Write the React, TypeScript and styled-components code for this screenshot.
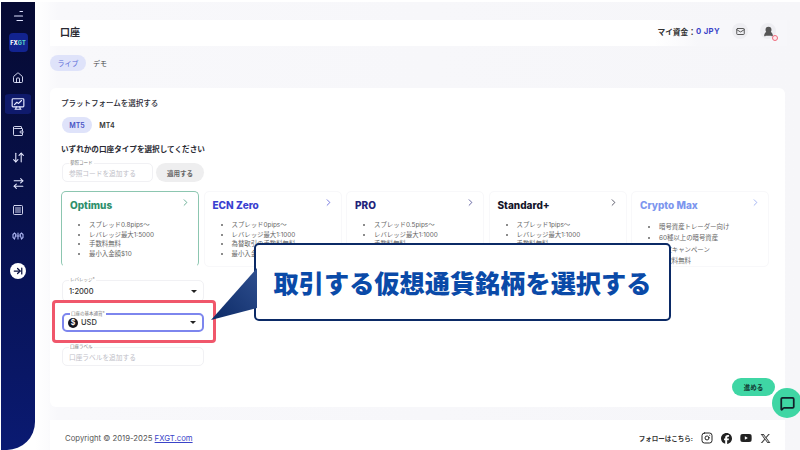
import React from 'react';
import styled, { createGlobalStyle } from 'styled-components';
import {
  Home,
  Wallet,
  ArrowDownUp,
  ArrowRightLeft,
  SquareMenu,
  ArrowRightToLine,
  Mail,
  UserRound,
  MessageSquare,
  ChevronRight,
  Instagram,
} from 'lucide-react';
import { FaFacebook, FaYoutube, FaXTwitter } from 'react-icons/fa6';

const GlobalStyle = createGlobalStyle`
  html, body { margin: 0; padding: 0; width: 800px; height: 450px; overflow: hidden; background: #fff; }
  * { box-sizing: border-box; }
  body { font-family: Inter, "Noto Sans CJK JP", sans-serif; color: #2a2a33; }
`;

type Plan = { name: string; color: string; points: string[]; active?: boolean; roomy?: boolean };

const plans: Plan[] = [
  { name: 'Optimus', color: '#2f8f6c', active: true, points: ['スプレッド0.8pips〜', 'レバレッジ最大1:5000', '手数料無料', '最小入金額$10'] },
  { name: 'ECN Zero', color: '#3a3fd0', points: ['スプレッド0pips〜', 'レバレッジ最大1:1000', '為替取引の手数料無料', '最小入金額$10'] },
  { name: 'PRO', color: '#23237a', points: ['スプレッド0.5pips〜', 'レバレッジ最大1:1000', '手数料無料', '最小入金額$10'] },
  { name: 'Standard+', color: '#14142a', points: ['スプレッド1pips〜', 'レバレッジ最大1:1000', '手数料無料', '最小入金額$10'] },
  { name: 'Crypto Max', color: '#7d96ee', roomy: true, points: ['暗号資産トレーダー向け', '60種以上の暗号資産', '限定キャンペーン', '手数料無料'] },
];

const MonitorIcon = () => (
  <svg width="14" height="14" viewBox="0 0 24 24" fill="none" stroke="#e6e9ff" strokeWidth="2" strokeLinecap="round" strokeLinejoin="round">
    <rect x="2" y="3" width="20" height="14" rx="1.5" />
    <path d="M6 13l4-4 3 2 5-5" />
    <path d="M9 17l-1 4M15 17l1 4M7 21h10" />
  </svg>
);

const GaugeIcon = () => (
  <svg width="12" height="12" viewBox="0 0 24 24" fill="none" stroke="#aab3f0" strokeWidth="2.2" strokeLinecap="round">
    <path d="M2 9l3-3 3 3-3 9-3-3zM22 9l-3-3-3 3 3 9 3-3z" />
    <path d="M12 6v12M9 12h6" />
  </svg>
);

const MenuIcon = () => (
  <svg width="11" height="12" viewBox="0 0 11 12" fill="none" stroke="#dfe3ff" strokeWidth="1.2" strokeLinecap="round">
    <path d="M7 1.5h2.5M1.5 6h8M4 10.5h5.5" />
  </svg>
);

const App = () => {
  return (
    <Page>
      <GlobalStyle />
      <Sidebar>
        <MenuToggle>
          <MenuIcon />
        </MenuToggle>
        <Logo>
          FX<LogoAccent>GT</LogoAccent>
        </Logo>
        <NavItem>
          <Home size={12} strokeWidth={1.8} />
        </NavItem>
        <NavItem $active>
          <MonitorIcon />
        </NavItem>
        <NavItem>
          <Wallet size={12} strokeWidth={1.8} />
        </NavItem>
        <NavItem>
          <ArrowDownUp size={13} />
        </NavItem>
        <NavItem>
          <ArrowRightLeft size={13} />
        </NavItem>
        <NavItem>
          <SquareMenu size={12} strokeWidth={1.8} />
        </NavItem>
        <NavItem>
          <GaugeIcon />
        </NavItem>
        <CollapseButton>
          <ArrowRightToLine size={10} strokeWidth={3} />
        </CollapseButton>
      </Sidebar>

      <Main>
        <TopBar>
          <PageTitle>口座</PageTitle>
          <Funds>
            <FundsLabel>マイ資金：</FundsLabel>
            <FundsValue>0 JPY</FundsValue>
          </Funds>
          <RoundIcon>
            <Mail size={9} strokeWidth={2.6} />
          </RoundIcon>
          <RoundIcon>
            <UserRound size={11} strokeWidth={3} fill="#555" />
            <AlertDot />
          </RoundIcon>
        </TopBar>

        <Tabs>
          <Pill $active>ライブ</Pill>
          <Pill>デモ</Pill>
        </Tabs>

        <Panel>
          <SectionTitle>プラットフォームを選択する</SectionTitle>
          <PlatformRow>
            <PlatformPill $active>MT5</PlatformPill>
            <PlatformPill>MT4</PlatformPill>
          </PlatformRow>
          <SectionHeading>いずれかの口座タイプを選択してください</SectionHeading>
          <CodeRow>
            <Field $width={91} $height={19}>
              <FieldLabel>参照コード</FieldLabel>
              <Placeholder>参照コードを追加する</Placeholder>
            </Field>
            <ApplyButton>適用する</ApplyButton>
          </CodeRow>

          <PlanRow>
            {plans.map((plan) => (
              <PlanCard key={plan.name} $active={plan.active}>
                <PlanHead>
                  <PlanName $color={plan.color}>{plan.name}</PlanName>
                  <ChevronRight size={11} strokeWidth={1.5} color={plan.color} />
                </PlanHead>
                <PlanList $roomy={plan.roomy}>
                  {plan.points.map((point) => (
                    <li key={point}>{point}</li>
                  ))}
                </PlanList>
              </PlanCard>
            ))}
          </PlanRow>

          <FormColumn>
            <Field $width={142} $height={22}>
              <FieldLabel>レバレッジ*</FieldLabel>
              <SelectValue>1:2000</SelectValue>
              <Caret />
            </Field>
            <Highlighted>
              <Field $width={142} $height={19} $focused>
                <FieldLabel>口座の基本通貨*</FieldLabel>
                <CoinBadge>$</CoinBadge>
                <SelectValue>USD</SelectValue>
                <Caret />
              </Field>
            </Highlighted>
            <Field $width={142} $height={19}>
              <FieldLabel>口座ラベル</FieldLabel>
              <Placeholder>口座ラベルを追加する</Placeholder>
            </Field>
          </FormColumn>

          <ProceedButton>進める</ProceedButton>
        </Panel>

        <Footer>
          <Copyright>
            Copyright © 2019-2025 <FooterLink>FXGT.com</FooterLink>
          </Copyright>
          <FollowLabel>フォローはこちら:</FollowLabel>
          <Socials>
            <Instagram size={12} strokeWidth={2} />
            <FaFacebook size={11} />
            <FaYoutube size={12} />
            <FaXTwitter size={11} color="#444" />
          </Socials>
        </Footer>
      </Main>

      <Callout>
        <CalloutPointer width="46" height="52" viewBox="0 0 46 52">
          <defs>
            <linearGradient id="pointerFill" x1="0" y1="1" x2="1" y2="0">
              <stop offset="0" stopColor="#0c2a66" />
              <stop offset="1" stopColor="#2f4f8f" />
            </linearGradient>
          </defs>
          <path d="M46 0L0 52L46 40Z" fill="url(#pointerFill)" />
        </CalloutPointer>
        <CalloutText>取引する仮想通貨銘柄を選択する</CalloutText>
      </Callout>

      <ChatBubble>
        <MessageSquare size={15} strokeWidth={2.8} color="#12202a" />
      </ChatBubble>
    </Page>
  );
};

export default App;

const Page = styled.div`
  position: relative;
  display: flex;
  width: 800px;
  height: 450px;
  padding-top: 2px;
  overflow: hidden;
  background: #fff;
`;

const Sidebar = styled.nav`
  flex: none;
  display: flex;
  flex-direction: column;
  align-items: center;
  width: 34px;
  height: 448px;
  margin-left: 1px;
  padding-top: 7px;
  color: #e6e9ff;
  background: linear-gradient(180deg, #060a33 0%, #07104a 45%, #0a1a72 100%);
  border-bottom-right-radius: 28px;
`;

const MenuToggle = styled.div`
  display: flex;
  align-items: center;
  justify-content: center;
  height: 14px;
  margin-bottom: 10px;
`;

const Logo = styled.div`
  display: flex;
  align-items: center;
  justify-content: center;
  width: 19px;
  height: 19px;
  margin-bottom: 13px;
  border-radius: 4px;
  font-size: 5.6px;
  font-weight: 800;
  color: #fff;
  background: #12238f;
`;

const LogoAccent = styled.span`
  color: #58d8c8;
`;

const NavItem = styled.div<{ $active?: boolean }>`
  display: flex;
  align-items: center;
  justify-content: center;
  width: 26px;
  height: 26px;
  padding: 3px 0;
  margin-bottom: 0.4px;
  border-radius: 5px;
  background: ${(p) => (p.$active ? '#0f1a6c' : 'transparent')};
  background-clip: content-box;
`;

const CollapseButton = styled.div`
  display: flex;
  align-items: center;
  justify-content: center;
  width: 16px;
  height: 16px;
  margin-top: 13px;
  border-radius: 50%;
  color: #0a1040;
  background: #fff;
`;

const Main = styled.main`
  flex: 1;
  display: flex;
  flex-direction: column;
  padding: 0 15px 0 15px;
  background: linear-gradient(90deg, #fff 0%, #f8f8fb 3%, #f6f6f9 100%);
`;

const TopBar = styled.header`
  display: flex;
  align-items: center;
  flex: none;
  height: 26px;
  margin: 18px -2px 0 0;
  padding: 0 11px 4px 10px;
  background: linear-gradient(90deg, #fff 0%, #fff 82%, #f7f7fa 88%);
`;

const PageTitle = styled.h1`
  flex: 1;
  margin: 0;
  font-size: 10px;
  font-weight: 700;
`;

const Funds = styled.div`
  display: flex;
  align-items: center;
  font-size: 7.7px;
  font-weight: 700;
`;

const FundsLabel = styled.span`
  color: #333;
`;

const FundsValue = styled.span`
  letter-spacing: 0.4px;
  color: #3a44c8;
`;

const RoundIcon = styled.div`
  position: relative;
  display: flex;
  align-items: center;
  justify-content: center;
  width: 16px;
  height: 16px;
  margin-left: 12px;
  border-radius: 50%;
  color: #555;
  background: #eeeef2;
`;

const AlertDot = styled.span`
  position: absolute;
  right: -2px;
  bottom: -2px;
  width: 6px;
  height: 6px;
  border: 1px solid #ef6a7c;
  border-radius: 50%;
  background: #fde8ec;
`;

const Tabs = styled.div`
  display: flex;
  align-items: center;
  flex: none;
  height: 16px;
  margin-top: 9px;
`;

const Pill = styled.div<{ $active?: boolean }>`
  display: flex;
  align-items: center;
  justify-content: center;
  width: 36px;
  height: 16px;
  margin-left: ${(p) => (p.$active ? '0' : '-4px')};
  border-radius: 8px;
  font-size: 7px;
  color: ${(p) => (p.$active ? '#5b6bd8' : '#444')};
  background: ${(p) => (p.$active ? '#dfe3fa' : 'transparent')};
`;

const Panel = styled.section`
  position: relative;
  flex: none;
  height: 319px;
  margin-top: 17px;
  padding: 10px 7px 0 11px;
  border-radius: 6px;
  background: #fff;
`;

const SectionTitle = styled.h2`
  margin: 0;
  height: 12px;
  font-size: 7.5px;
  line-height: 12px;
  font-weight: 500;
`;

const PlatformRow = styled.div`
  display: flex;
  align-items: center;
  margin-top: 7px;
`;

const PlatformPill = styled.div<{ $active?: boolean }>`
  display: flex;
  align-items: center;
  justify-content: center;
  width: 30px;
  height: 16px;
  margin-left: ${(p) => (p.$active ? '1px' : '0')};
  border-radius: 8px;
  font-size: 7px;
  font-weight: 600;
  color: ${(p) => (p.$active ? '#4652c4' : '#333')};
  background: ${(p) => (p.$active ? '#dfe3fa' : 'transparent')};
`;

const SectionHeading = styled.h2`
  margin: 11px 0 0;
  height: 12px;
  font-size: 7.6px;
  line-height: 12px;
  font-weight: 700;
`;

const CodeRow = styled.div`
  display: flex;
  align-items: center;
  gap: 3px;
  margin: 7px 0 0 1px;
`;

const Field = styled.div<{ $width: number; $height: number; $focused?: boolean }>`
  position: relative;
  display: flex;
  align-items: center;
  flex: none;
  width: ${(p) => p.$width}px;
  height: ${(p) => p.$height}px;
  padding: 0 6px 0 6px;
  border-width: ${(p) => (p.$focused ? '2px' : '1px')};
  border-style: solid;
  border-color: ${(p) => (p.$focused ? '#7d86ee' : '#f1f1f4')};
  border-radius: 5px;
  background: #fff;
`;

const FieldLabel = styled.label`
  position: absolute;
  top: -4px;
  left: 6px;
  padding: 0 1px;
  font-size: 4.5px;
  line-height: 6px;
  color: #777;
  background: #fff;
`;

const Placeholder = styled.span`
  font-size: 6.7px;
  color: #c0c0c8;
`;

const ApplyButton = styled.button`
  width: 48px;
  height: 19px;
  padding: 0;
  border: 0;
  border-radius: 10px;
  font-family: inherit;
  font-size: 6.5px;
  font-weight: 600;
  color: #666;
  background: #eeeeef;
`;

const PlanRow = styled.div`
  display: grid;
  grid-template-columns: repeat(5, 138px);
  column-gap: 4.5px;
  margin: 9px 0 0 0;
  align-items: start;
`;

const PlanCard = styled.article<{ $active?: boolean }>`
  height: 76px;
  padding: 7px 7px 0 8px;
  border: 1px solid ${(p) => (p.$active ? '#8cc6b0' : '#f8f8fa')};
  border-bottom-color: ${(p) => (p.$active ? 'transparent' : '#f8f8fa')};
  border-radius: 5px;
`;

const PlanHead = styled.div`
  display: flex;
  align-items: flex-start;
  justify-content: space-between;
  height: 12px;
  line-height: 0;

  svg {
    margin-top: -2px;
  }
`;

const PlanName = styled.h3<{ $color: string }>`
  margin: 0;
  font-size: 10px;
  line-height: 12px;
  font-weight: 800;
  color: ${(p) => p.$color};
`;

const PlanList = styled.ul<{ $roomy?: boolean }>`
  margin: ${(p) => (p.$roomy ? '11px' : '10px')} 0 0;
  padding-left: 19px;
  font-size: 6.4px;
  line-height: ${(p) => (p.$roomy ? '11.3px' : '9.5px')};
  color: #666;
  white-space: nowrap;
`;

const FormColumn = styled.div`
  display: flex;
  flex-direction: column;
  gap: 11px;
  margin: 13px 0 0 1px;
`;

const Highlighted = styled.div`
  position: relative;
  width: 142px;
  height: 19px;
  margin-bottom: 4px;

  &::after {
    content: '';
    position: absolute;
    inset: -13px -12px -11px -10px;
    border: 3px solid #f0576b;
    border-radius: 4px;
    pointer-events: none;
  }
`;

const SelectValue = styled.span`
  flex: 1;
  font-size: 7.5px;
  font-weight: 500;
  color: #333;
`;

const Caret = styled.span`
  width: 0;
  height: 0;
  border-left: 3px solid transparent;
  border-right: 3px solid transparent;
  border-top: 3px solid #222;
`;

const CoinBadge = styled.span`
  display: flex;
  align-items: center;
  justify-content: center;
  flex: none;
  width: 10px;
  height: 10px;
  margin: 0 3px 0 -2px;
  border-radius: 50%;
  font-size: 7px;
  font-weight: 700;
  color: #fff;
  background: #14141e;
`;

const ProceedButton = styled.button`
  position: absolute;
  right: 10px;
  bottom: 11px;
  width: 43px;
  height: 18px;
  padding: 0;
  border: 0;
  border-radius: 9px;
  font-family: inherit;
  font-size: 6.5px;
  font-weight: 700;
  color: #123a33;
  background: #3fd6a4;
`;

const Footer = styled.footer`
  display: flex;
  align-items: center;
  flex: none;
  height: 30px;
  margin-top: 13px;
  padding: 6px 14px 0 15px;
  background: #fff;
`;

const Copyright = styled.div`
  flex: 1;
  font-size: 7.75px;
  color: #555;
`;

const FooterLink = styled.a`
  color: #3a44c8;
  text-decoration: underline;
`;

const FollowLabel = styled.span`
  margin-right: 8px;
  font-size: 6.5px;
  font-weight: 700;
  color: #333;
`;

const Socials = styled.div`
  display: flex;
  align-items: center;
  gap: 8px;
  color: #222;
`;

const Callout = styled.div`
  position: absolute;
  top: 243px;
  left: 254px;
  display: flex;
  align-items: center;
  justify-content: center;
  width: 417px;
  height: 78px;
  border: 2px solid #0b2a66;
  border-radius: 5px;
  background: #fff;
`;

const CalloutPointer = styled.svg`
  position: absolute;
  top: 23px;
  left: -45px;
`;

const CalloutText = styled.span`
  font-size: 25.2px;
  font-weight: 900;
  white-space: nowrap;
  color: #0a4aa8;
`;

const ChatBubble = styled.div`
  position: absolute;
  top: 388px;
  left: 772px;
  display: flex;
  align-items: center;
  justify-content: center;
  width: 30px;
  height: 30px;
  border-radius: 50%;
  background: #3fd6a4;
`;
